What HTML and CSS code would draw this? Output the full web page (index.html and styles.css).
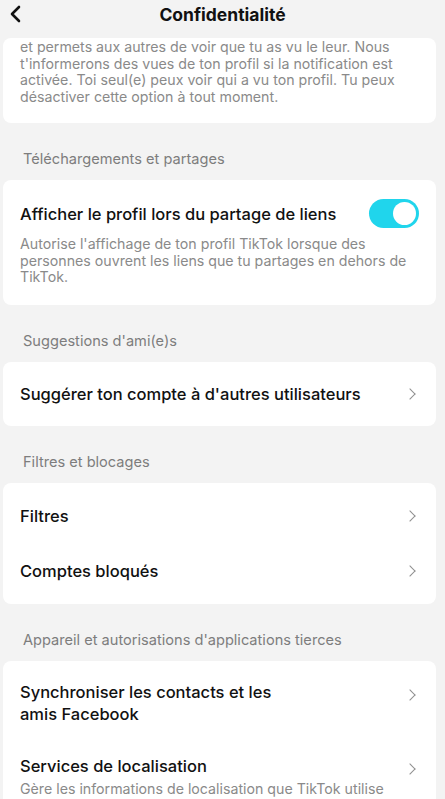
FILE: index.html
```html
<!DOCTYPE html>
<html lang="fr">
<head>
  <meta charset="UTF-8">
  <meta name="viewport" content="width=device-width, initial-scale=1.0">
  <title>Confidentialité</title>
  <link rel="stylesheet" href="styles.css">
</head>
<body>
  <div class="topbar">
    <a class="back" href="#">
      <svg width="14" height="18" viewBox="0 0 14 18"><path d="M10 2 L3 9 L10 16" fill="none" stroke="#111" stroke-width="2.6" stroke-linecap="round" stroke-linejoin="round"/></svg>
    </a>
    <h1>Confidentialité</h1>
  </div>

  <div class="content">
    <div class="card card-cut">
      <p class="desc">et permets aux autres de voir que tu as vu le leur. Nous t'informerons des vues de ton profil si la notification est activée. Toi seul(e) peux voir qui a vu ton profil. Tu peux désactiver cette option à tout moment.</p>
    </div>

    <div class="section">Téléchargements et partages</div>
    <div class="card card-toggle">
      <div class="toggle-row">
        <span class="label">Afficher le profil lors du partage de liens</span>
        <span class="switch on"><span class="knob"></span></span>
      </div>
      <p class="desc">Autorise l'affichage de ton profil TikTok lorsque des personnes ouvrent les liens que tu partages en dehors de TikTok.</p>
    </div>

    <div class="section">Suggestions d'ami(e)s</div>
    <div class="card">
      <div class="row row-single">
        <span class="label">Suggérer ton compte à d'autres utilisateurs</span>
        <span class="chev"></span>
      </div>
    </div>

    <div class="section">Filtres et blocages</div>
    <div class="card card-list">
      <div class="row">
        <span class="label">Filtres</span>
        <span class="chev"></span>
      </div>
      <div class="row">
        <span class="label">Comptes bloqués</span>
        <span class="chev"></span>
      </div>
    </div>

    <div class="section">Appareil et autorisations d'applications tierces</div>
    <div class="card card-last">
      <div class="row-top">
        <span class="label narrow">Synchroniser les contacts et les amis Facebook</span>
        <span class="chev"></span>
      </div>
      <div class="row-top loc">
        <div class="loc-text">
          <span class="label">Services de localisation</span>
          <p class="desc">Gère les informations de localisation que TikTok utilise pour personnaliser ton expérience.</p>
        </div>
        <span class="chev"></span>
      </div>
    </div>
  </div>
</body>
</html>
```

FILE: styles.css
```css
body {
  font-family: Inter, Roboto, "Liberation Sans", sans-serif;
  margin: 0;
  padding: 0;
  background-color: #f3f3f3;
  color: #111;
  width: 445px;
  height: 799px;
  overflow: hidden;
}

.topbar {
  height: 30px;
  display: flex;
  align-items: center;
  justify-content: center;
  position: relative;
}

.topbar h1 {
  margin: 0;
  font-size: 17.5px;
  font-weight: 700;
  line-height: 28px;
}

.back {
  position: absolute;
  left: 9px;
  top: 5px;
  display: flex;
}

.content {
  padding: 8px 9px 0 3px;
}

.card {
  background-color: #fff;
  border-radius: 8px;
  padding: 0 17px;
}

.card-cut {
  padding: 1px 17px 18px;
}

.desc {
  margin: 0;
  font-size: 14.2px;
  line-height: 16.5px;
  color: #8a8a8a;
}

.section {
  padding: 26px 20px 11px;
  font-size: 14.6px;
  line-height: 20px;
  color: #7d7d7d;
}

.label {
  font-size: 16.5px;
  font-weight: 500;
  line-height: 22px;
  color: #111;
}

.card-toggle {
  padding: 19px 17px 19px;
}

.toggle-row {
  display: flex;
  align-items: center;
  justify-content: space-between;
  margin-bottom: 8px;
}

.switch {
  width: 50px;
  height: 29px;
  border-radius: 15px;
  background-color: #20d5ec;
  position: relative;
  flex-shrink: 0;
}

.switch .knob {
  position: absolute;
  right: 3px;
  top: 3px;
  width: 23px;
  height: 23px;
  border-radius: 50%;
  background-color: #fff;
}

.row {
  display: flex;
  align-items: center;
  justify-content: space-between;
  height: 55px;
}

.row-single {
  height: 64px;
}

.card-list {
  padding: 6px 17px 5px;
}

.chev {
  width: 7px;
  height: 7px;
  border-top: 1.6px solid #8f8f8f;
  border-right: 1.6px solid #8f8f8f;
  transform: rotate(45deg);
  margin-right: 5px;
  flex-shrink: 0;
}

.card-last {
  padding: 20px 17px 10px;
}

.row-top {
  display: flex;
  align-items: flex-start;
  justify-content: space-between;
}

.row-top .chev {
  margin-top: 10px;
}

.narrow {
  max-width: 262px;
}

.loc {
  margin-top: 30px;
}

.loc-text {
  max-width: 375px;
}

.loc .desc {
  margin-top: 4px;
}
```
